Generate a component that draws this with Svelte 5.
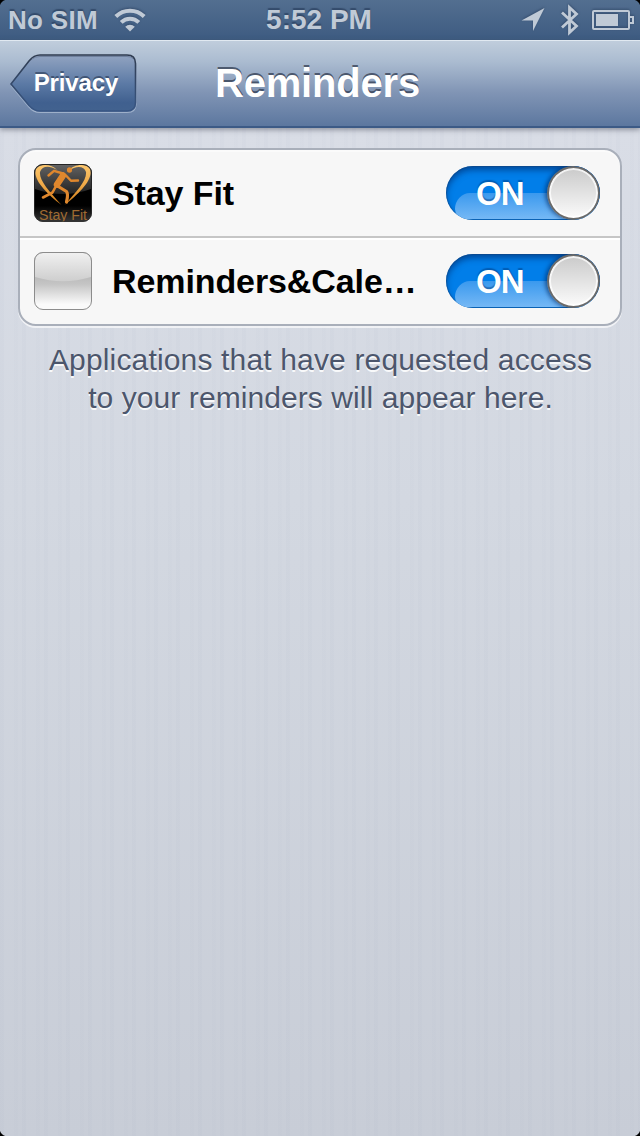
<script>
  const apps = $state([
    { name: 'Stay Fit', icon: 'fit', on: true },
    { name: 'Reminders&Cale…', icon: 'blank', on: true }
  ]);
</script>

<div class="screen">
  <header class="status">
    <div class="carrier">
      <span>No SIM</span>
      <svg class="wifi" width="32" height="24" viewBox="0 0 32 24" fill="none" stroke="#c0cad6" stroke-width="4">
        <path d="M1.8 8.5a20.2 20.2 0 0 1 28.4 0" />
        <path d="M7.2 14.4a12.4 12.4 0 0 1 17.6 0" />
        <path d="M11.2 18.8a6.8 6.8 0 0 1 9.6 0L16 23.6z" fill="#c0cad6" stroke="none" />
      </svg>
    </div>
    <time>5:52 PM</time>
    <div class="indicators">
      <svg width="24" height="24" viewBox="0 0 24 24"><path d="M23.500 0 12 23V12.500H0.500z" fill="#c0cad6" /></svg>
      <svg class="bt" width="20" height="32" viewBox="0 0 20 32" fill="none" stroke="#c0cad6" stroke-width="2.8">
        <path d="M2 8.5 16.500 22 9.500 28.5V3.500L16.500 10 2 23.5" />
      </svg>
      <svg class="battery" width="42" height="20" viewBox="0 0 42 20" fill="none" stroke="#c0cad6" stroke-width="2">
        <rect x="1" y="1" width="36" height="18" rx="1" />
        <path d="M37 7h4v6h-4" />
        <rect x="4" y="4" width="22" height="12" fill="#c0cad6" stroke="none" />
      </svg>
    </div>
  </header>

  <nav>
    <button class="back">
      <svg width="130" height="62" viewBox="0 0 130 62">
        <defs>
          <linearGradient id="backFill" x1="0" y1="0" x2="0" y2="1">
            <stop offset="0" stop-color="#92a4c1" />
            <stop offset="0.5" stop-color="#5d7ba6" />
            <stop offset="0.85" stop-color="#40608f" />
            <stop offset="1" stop-color="#42628f" />
          </linearGradient>
          <linearGradient id="backEdge" x1="0" y1="0" x2="0" y2="1">
            <stop offset="0" stop-color="#303c50" />
            <stop offset="1" stop-color="#385684" />
          </linearGradient>
        </defs>
        <path d="M2 32.500 20 54Q24.500 59.500 31 59.500H118Q127 59.500 127 51V12" fill="none" stroke="#9eb0ca" stroke-width="1.2" />
        <path d="M2 31 20 8Q25 2 31 2H118Q126.500 2 126.500 10.500V49.500Q126.500 58 118 58H31Q25 58 20 52.500Z" fill="url(#backFill)" stroke="url(#backEdge)" stroke-width="1.600" />
        <path d="M23 6Q26 3.500 31 3.500H118Q122 3.500 124 5.500" fill="none" stroke="#6f809d" />
      </svg>
      <span>Privacy</span>
    </button>
    <h1>Reminders</h1>
  </nav>

  <main>
    <section class="group">
      {#each apps as app}
        <div class="row">
          {#if app.icon === 'fit'}
            <svg class="icon" width="58" height="58" viewBox="0 0 58 58">
              <defs>
                <linearGradient id="gloss" x1="0" y1="0" x2="0" y2="1">
                  <stop offset="0" stop-color="#626262" />
                  <stop offset="1" stop-color="#222" />
                </linearGradient>
                <linearGradient id="gold" x1="0" y1="0" x2="0" y2="1">
                  <stop offset="0" stop-color="#fcc66c" />
                  <stop offset="0.5" stop-color="#efa947" />
                  <stop offset="1" stop-color="#c87616" />
                </linearGradient>
                <linearGradient id="floor" x1="0" y1="0" x2="0" y2="1">
                  <stop offset="0.72" stop-color="#000" />
                  <stop offset="1" stop-color="#363636" />
                </linearGradient>
              </defs>
              <rect width="58" height="58" rx="9" fill="url(#floor)" />
              <path d="M1 25V9Q1 1 9 1H49Q57 1 57 9V25Q29 35 1 25Z" fill="url(#gloss)" />
              <path d="M27.500 41C13 30-2 15 2 5 6-1 18 0 23 6 15 1 8 2 6 8 5 16 15 27 27.500 41Z" fill="url(#gold)" />
              <path d="M30.500 41C45 30 60 15 56 5 52-1 40 0 34 7 43 1 50 2 52 8 53 16 43 27 30.500 41Z" fill="url(#gold)" />
              <g fill="none" stroke="#df872d" stroke-linecap="round" stroke-linejoin="round">
                <ellipse cx="35.500" cy="6" rx="2.600" ry="2.800" fill="#df872d" stroke="none" />
                <path d="M14.500 11.500 20 6.800 29 9.500" stroke-width="2.400" />
                <path d="M32 11.500 37 16.800 44 16.500" stroke-width="2.400" />
                <path d="M29 11.500 23 20.500" stroke-width="6.500" />
                <path d="M23.500 22 32.500 27.500Q34.500 30 32.500 38" stroke-width="3.200" />
                <path d="M22 22 18.500 28.500 9 33.500" stroke-width="2.600" />
              </g>
              <text x="5" y="56" textLength="48" lengthAdjust="spacingAndGlyphs">Stay Fit</text>
              <rect x="0.5" y="0.5" width="57" height="57" rx="8.500" fill="none" stroke="#333" stroke-opacity="0.7" />
            </svg>
          {:else}
            <svg class="icon" width="58" height="58" viewBox="0 0 58 58">
              <defs>
                <linearGradient id="blankFill" x1="0" y1="0" x2="0" y2="1">
                  <stop offset="0.4" stop-color="#b9b9b9" />
                  <stop offset="0.55" stop-color="#c4c4c4" />
                  <stop offset="0.9" stop-color="#fafafa" />
                </linearGradient>
                <linearGradient id="blankGloss" x1="0" y1="0" x2="0" y2="1">
                  <stop offset="0" stop-color="#f0f0f0" />
                  <stop offset="1" stop-color="#cecece" />
                </linearGradient>
              </defs>
              <rect width="58" height="58" rx="9" fill="url(#blankFill)" />
              <path d="M1 25V9Q1 1 9 1H49Q57 1 57 9V25Q29 33.500 1 25Z" fill="url(#blankGloss)" />
              <rect x="0.5" y="0.5" width="57" height="57" rx="8.500" fill="none" stroke="#8c8c8c" />
            </svg>
          {/if}
          <span class="name">{app.name}</span>
          <button class="switch" aria-label={app.name} onclick={() => (app.on = !app.on)}>
            <span class="shine"></span>
            <span class="label">{app.on ? 'ON' : 'OFF'}</span>
            <span class="knob"></span>
          </button>
        </div>
      {/each}
    </section>
    <p><span>Applications that have requested access</span><br />to your reminders will appear here.</p>
  </main>
  <i class="corner tl"></i><i class="corner tr"></i><i class="corner bl"></i><i class="corner br"></i>
</div>

<style>
  :global(body) { margin: 0; }
  .screen {
    position: relative;
    box-sizing: border-box;
    width: 640px;
    height: 1136px;
    overflow: hidden;
    display: flex;
    flex-direction: column;
    font-family: "Liberation Sans", Arial, sans-serif;
    background:
      repeating-linear-gradient(90deg, rgba(120,135,165,0.03) 0 4px, transparent 4px 14px, rgba(120,135,165,0.02) 14px 18px, transparent 18px 22px),
      linear-gradient(#d9dde6 128px, #d3d8e1 500px, #c8cdd7);
  }
  button { border: 0; padding: 0; background: none; font: inherit; }
  svg { display: block; flex: none; }
  .status {
    height: 40px;
    flex: none;
    display: grid;
    grid-template-columns: 1fr auto 1fr;
    align-items: center;
    box-sizing: border-box;
    padding: 0 6px 0 8px;
    color: #c0cad6;
    font-weight: bold;
    background: linear-gradient(#536f90, #3d5b81);
    text-shadow: 0 -2px 1px rgba(35,55,85,0.6);
  }
  .status svg { filter: drop-shadow(0 -1px 1px rgba(35,55,85,0.55)); }
  .carrier { display: flex; align-items: center; gap: 16px; font-size: 26px; letter-spacing: 0.3px; }
  time { font-size: 28px; margin-left: -4px; }
  .indicators { display: flex; justify-content: flex-end; align-items: center; }
  .bt { margin: 0 12px 0 15px; }
  nav {
    position: relative;
    height: 88px;
    flex: none;
    box-sizing: border-box;
    display: flex;
    align-items: center;
    justify-content: center;
    border-top: 1px solid #e1e9f1;
    border-bottom: 2px solid #3c5a86;
    background: linear-gradient(#c0cddc, #aabbd0 25%, #8195b5 60%, #5c779f);
    box-shadow: 0 2px 5px rgba(70,75,90,0.5);
  }
  .back { position: absolute; left: 9px; top: 12px; width: 130px; height: 62px; }
  .back svg { position: absolute; inset: 0; }
  .back span {
    position: relative;
    display: block;
    padding: 0 3px 2px 7px;
    color: #fff;
    font-size: 24px;
    font-weight: bold;
    line-height: 60px;
    letter-spacing: -0.1px;
    text-shadow: 0 -2px 0 rgba(30,45,70,0.55);
  }
  h1 {
    margin: 0 0 1px -5px;
    color: #fff;
    font-size: 40px;
    letter-spacing: -0.2px;
    text-shadow: 0 -2px 0 rgba(40,50,70,0.7);
  }
  main { padding: 20px 18px; }
  .group {
    border: 2px solid #a9afba;
    border-radius: 18px;
    background: #f7f7f7;
    box-shadow: 0 2px 0 rgba(255,255,255,0.65), inset 0 2px 1px rgba(255,255,255,0.5);
    overflow: hidden;
  }
  .row {
    box-sizing: border-box;
    height: 86px;
    display: flex;
    align-items: center;
    padding: 0 20px 0 14px;
  }
  .row + .row { height: 88px; border-top: 2px solid #c6c6c6; box-shadow: inset 0 2px #fff; }
  .icon text { font-family: "Liberation Sans", Arial, sans-serif; font-size: 14px; fill: #a06b32; }
  .name { flex: 1; margin-left: 20px; font-size: 34px; letter-spacing: -0.1px; font-weight: bold; color: #000; white-space: nowrap; }
  .switch {
    position: relative;
    width: 154px;
    height: 54px;
    flex: none;
    border-radius: 27px;
    overflow: hidden;
    background: #017ee9;
    box-shadow: inset 0 0 0 1px rgba(25,65,115,0.4), inset 0 4px 6px rgba(0,45,110,0.65);
  }
  .shine {
    position: absolute;
    left: 9px;
    top: 27px;
    width: 138px;
    height: 26px;
    border-radius: 15px 0 0 10px / 16px 0 0 10px;
    background: linear-gradient(#3a99ee, #75b8f5);
  }
  .label {
    position: absolute;
    left: 30px;
    top: 10px;
    color: #fff;
    font-size: 33px;
    font-weight: bold;
    line-height: 36px;
    letter-spacing: -1px;
    text-shadow: 0 -2px 1px rgba(0,60,130,0.5);
  }
  .knob {
    position: absolute;
    right: 0;
    top: 0;
    box-sizing: border-box;
    width: 53px;
    height: 54px;
    border: 2px solid #6a6a6a;
    border-radius: 50%;
    background: linear-gradient(#cacaca, #fbfbfb);
    box-shadow: -2px 0 4px rgba(0,35,90,0.6), inset 0 0 0 2px rgba(255,255,255,0.75);
  }
  p {
    margin: 15px 0 0;
    padding-left: 1px;
    text-align: center;
    font-size: 30px;
    line-height: 38px;
    letter-spacing: 0.08px;
    color: #4c566c;
    text-shadow: 0 2px 0 rgba(255,255,255,0.85);
  }
  p span { letter-spacing: 0.16px; }
  .corner { position: absolute; width: 8px; height: 8px; }
  .tl { left: 0; top: 0; background: radial-gradient(circle at 100% 100%, transparent 8px, #000 9px); }
  .tr { right: 0; top: 0; background: radial-gradient(circle at 0 100%, transparent 8px, #000 9px); }
  .bl { left: 0; bottom: 0; background: radial-gradient(circle at 100% 0, transparent 8px, #000 9px); }
  .br { right: 0; bottom: 0; background: radial-gradient(circle at 0 0, transparent 8px, #000 9px); }
</style>
